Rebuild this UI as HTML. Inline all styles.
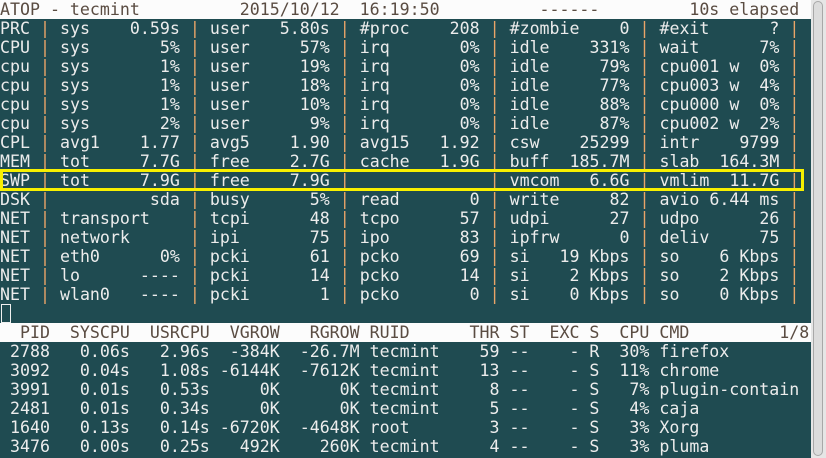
<!DOCTYPE html>
<html><head><meta charset="utf-8"><style>
html,body{margin:0;padding:0;width:826px;height:458px;overflow:hidden;background:#1f4b51}
#t{position:absolute;left:0;top:0;width:811px;height:458px;background:#1f4b51;overflow:hidden}
.l{position:absolute;left:0;height:19px;line-height:19px;white-space:pre;font-family:"DejaVu Sans Mono","Liberation Mono",monospace;font-size:16.6px;color:#ececec;width:811px}
.w{background:#fcfcfc;color:#5a4c42}
i{font-style:normal;color:#e9a468}
#sb{position:absolute;left:811px;top:0;width:15px;height:458px;background:#e6e6e6}
#th{position:absolute;left:813px;top:1px;width:10px;height:455px;border:1px solid #a8a8a8;border-radius:6px;background:#dcdcdc;box-sizing:border-box}
#box{position:absolute;left:0;top:169px;width:804px;height:22px;border:3px solid #f7f000;box-sizing:border-box}
#cur{position:absolute;left:1px;top:304px;width:10px;height:19px;border:1px solid #f0f0f0;box-sizing:border-box}
</style></head><body>
<div id="t">
<div class="l w" style="top:0">ATOP - tecmint          2015/10/12  16:19:50          ------         10s elapsed</div>
<div class="l" style="top:19px">PRC <i>|</i> sys    0.59s <i>|</i> user   5.80s <i>|</i> #proc    208 <i>|</i> #zombie    0 <i>|</i> #exit      ? <i>|</i></div>
<div class="l" style="top:38px">CPU <i>|</i> sys       5% <i>|</i> user     57% <i>|</i> irq       0% <i>|</i> idle    331% <i>|</i> wait      7% <i>|</i></div>
<div class="l" style="top:57px">cpu <i>|</i> sys       1% <i>|</i> user     19% <i>|</i> irq       0% <i>|</i> idle     79% <i>|</i> cpu001 w  0% <i>|</i></div>
<div class="l" style="top:76px">cpu <i>|</i> sys       1% <i>|</i> user     18% <i>|</i> irq       0% <i>|</i> idle     77% <i>|</i> cpu003 w  4% <i>|</i></div>
<div class="l" style="top:95px">cpu <i>|</i> sys       1% <i>|</i> user     10% <i>|</i> irq       0% <i>|</i> idle     88% <i>|</i> cpu000 w  0% <i>|</i></div>
<div class="l" style="top:114px">cpu <i>|</i> sys       2% <i>|</i> user      9% <i>|</i> irq       0% <i>|</i> idle     87% <i>|</i> cpu002 w  2% <i>|</i></div>
<div class="l" style="top:133px">CPL <i>|</i> avg1    1.77 <i>|</i> avg5    1.90 <i>|</i> avg15   1.92 <i>|</i> csw    25299 <i>|</i> intr    9799 <i>|</i></div>
<div class="l" style="top:152px">MEM <i>|</i> tot     7.7G <i>|</i> free    2.7G <i>|</i> cache   1.9G <i>|</i> buff  185.7M <i>|</i> slab  164.3M <i>|</i></div>
<div class="l" style="top:171px">SWP <i>|</i> tot     7.9G <i>|</i> free    7.9G <i>|</i>              <i>|</i> vmcom   6.6G <i>|</i> vmlim  11.7G <i>|</i></div>
<div class="l" style="top:190px">DSK <i>|</i>          sda <i>|</i> busy      5% <i>|</i> read       0 <i>|</i> write     82 <i>|</i> avio 6.44 ms <i>|</i></div>
<div class="l" style="top:209px">NET <i>|</i> transport    <i>|</i> tcpi      48 <i>|</i> tcpo      57 <i>|</i> udpi      27 <i>|</i> udpo      26 <i>|</i></div>
<div class="l" style="top:228px">NET <i>|</i> network      <i>|</i> ipi       75 <i>|</i> ipo       83 <i>|</i> ipfrw      0 <i>|</i> deliv     75 <i>|</i></div>
<div class="l" style="top:247px">NET <i>|</i> eth0      0% <i>|</i> pcki      61 <i>|</i> pcko      69 <i>|</i> si   19 Kbps <i>|</i> so    6 Kbps <i>|</i></div>
<div class="l" style="top:266px">NET <i>|</i> lo      ---- <i>|</i> pcki      14 <i>|</i> pcko      14 <i>|</i> si    2 Kbps <i>|</i> so    2 Kbps <i>|</i></div>
<div class="l" style="top:285px">NET <i>|</i> wlan0   ---- <i>|</i> pcki       1 <i>|</i> pcko       0 <i>|</i> si    0 Kbps <i>|</i> so    0 Kbps <i>|</i></div>
<div id="cur"></div>
<div class="l w" style="top:323px">  PID  SYSCPU  USRCPU  VGROW   RGROW RUID      THR ST  EXC S  CPU CMD         1/8</div>
<div class="l" style="top:342px"> 2788   0.06s   2.96s  -384K  -26.7M tecmint    59 --    - R  30% firefox</div>
<div class="l" style="top:361px"> 3092   0.04s   1.08s -6144K  -7612K tecmint    13 --    - S  11% chrome</div>
<div class="l" style="top:380px"> 3991   0.01s   0.53s     0K      0K tecmint     8 --    - S   7% plugin-contain</div>
<div class="l" style="top:399px"> 2481   0.01s   0.34s     0K      0K tecmint     5 --    - S   4% caja</div>
<div class="l" style="top:418px"> 1640   0.13s   0.14s -6720K  -4648K root        3 --    - S   3% Xorg</div>
<div class="l" style="top:437px"> 3476   0.00s   0.25s   492K    260K tecmint     4 --    - S   3% pluma</div>
<div id="box"></div>
</div>
<div id="sb"></div><div id="th"></div>
</body></html>
